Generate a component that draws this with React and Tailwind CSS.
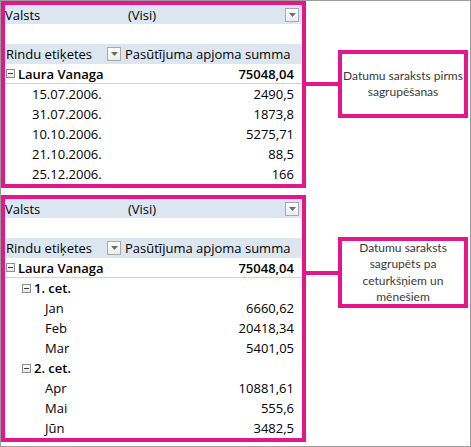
import React from 'react';

const pink = 'border-[#e3168c]';

// small excel-style filter button
function FilterButton({ className = '' }) {
  return (
    <div className={`w-[14px] h-[14px] border border-[#a9a9a9] bg-gradient-to-b from-white to-[#ececec] flex items-center justify-center ${className}`}>
      <svg width="7" height="4" viewBox="0 0 7 4">
        <path d="M0 0h7L3.5 4z" fill="#6d6d6d" />
      </svg>
    </div>
  );
}

function MinusBox() {
  return (
    <div className="w-[9px] h-[9px] border border-[#8e8e8e] bg-gradient-to-b from-white to-[#e6e6e6] flex items-center justify-center mr-[3px]">
      <div className="w-[5px] h-px bg-[#3c3c3c]" />
    </div>
  );
}

function Row({ label, value, indent, bold, expander, line }) {
  return (
    <div className={`h-[20px] flex items-center pr-[8px] ${bold ? 'font-semibold' : ''} ${line ? 'border-b border-[#c5d5ea]' : ''}`}>
      <div className={`flex items-center ${indent}`}>
        {expander && <MinusBox />}
        <span>{label}</span>
      </div>
      <span className="ml-auto">{value}</span>
    </div>
  );
}

function PivotTable({ rows }) {
  return (
    <div className={`w-[305px] border-4 ${pink} bg-white text-[13px] leading-[20px] text-black`} style={{ fontFamily: '"Open Sans", Lato, sans-serif' }}>
      <div className="h-[19px] bg-[#dce6f1] flex items-center pr-[3px]">
        <span className="w-[123px]">Valsts</span>
        <span>(Visi)</span>
        <FilterButton className="ml-auto" />
      </div>
      <div className="h-[20px]" />
      <div className="h-[20px] bg-[#dce6f1] flex items-center">
        <span className="pl-[1px] w-[102px]">Rindu etiķetes</span>
        <FilterButton />
        <span className="ml-[4px]">Pasūtījuma apjoma summa</span>
      </div>
      <Row label="Laura Vanaga" value="75048,04" indent="pl-[1px]" bold expander line />
      {rows.map((r) => (
        <Row key={r.label} {...r} />
      ))}
    </div>
  );
}

function Callout({ lines, height, top }) {
  return (
    <div className={`flex items-center ${top}`}>
      <div className="w-[32px] h-[4px] bg-[#e3168c]" />
      <div
        className={`w-[130px] ${height} border-4 ${pink} bg-white flex flex-col items-center justify-center text-center text-[12px] leading-[16.5px] text-[#3a3a3a]`}
        style={{ fontFamily: 'Lato, "Open Sans", sans-serif' }}
      >
        {lines.map((l) => (
          <span key={l}>{l}</span>
        ))}
      </div>
    </div>
  );
}

const dateRows = [
  { label: '15.07.2006.', value: '2490,5' },
  { label: '31.07.2006.', value: '1873,8' },
  { label: '10.10.2006.', value: '5275,71' },
  { label: '21.10.2006.', value: '88,5' },
  { label: '25.12.2006.', value: '166' },
].map((r) => ({ ...r, indent: 'pl-[27px]' }));

const quarterRows = [
  { label: '1. cet.', value: '', bold: true, expander: true, indent: 'pl-[17px]' },
  { label: 'Jan', value: '6660,62', indent: 'pl-[40px]' },
  { label: 'Feb', value: '20418,34', indent: 'pl-[40px]' },
  { label: 'Mar', value: '5401,05', indent: 'pl-[40px]' },
  { label: '2. cet.', value: '', bold: true, expander: true, indent: 'pl-[17px]' },
  { label: 'Apr', value: '10881,61', indent: 'pl-[40px]' },
  { label: 'Mai', value: '555,6', indent: 'pl-[40px]' },
  { label: 'Jūn', value: '3482,5', indent: 'pl-[40px]' },
];

export default function App() {
  return (
    <div className="w-[471px] h-[447px] border border-[#9c9c9c] bg-white overflow-hidden">
      <div className="flex items-start">
        <PivotTable rows={dateRows} />
        <Callout top="mt-[49px]" height="h-[68px]" lines={['Datumu saraksts pirms', 'sagrupēšanas']} />
      </div>
      <div className="flex items-start mt-[7px]">
        <PivotTable rows={quarterRows} />
        <Callout
          top="mt-[42px]"
          height="h-[71px]"
          lines={['Datumu saraksts', 'sagrupēts pa', 'ceturkšņiem un', 'mēnešiem']}
        />
      </div>
    </div>
  );
}
